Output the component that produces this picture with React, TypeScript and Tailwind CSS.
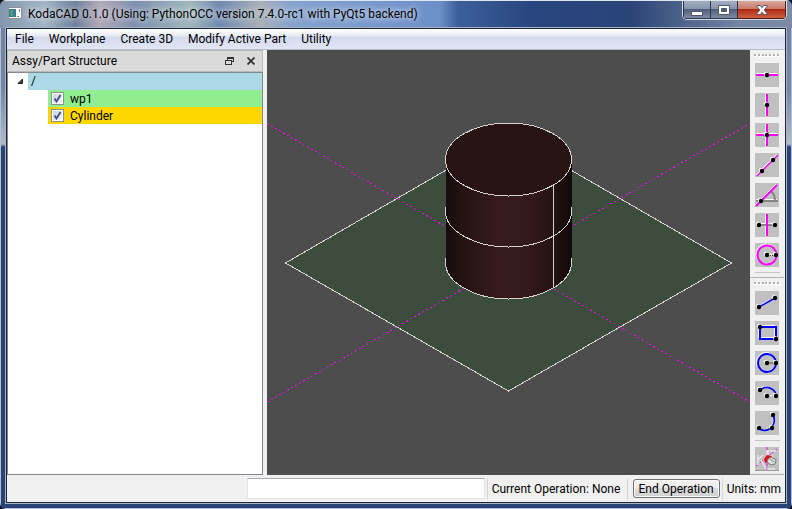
import type { ReactNode } from "react";

const MAGENTA = "#ff00ff";
const BLUE = "#0000ff";

function Dot({ x, y }: { x: number; y: number }) {
  return (
    <g>
      <circle cx={x - 1} cy={y - 1} r="2" fill="#fff" />
      <circle cx={x} cy={y} r="2.2" fill="#000" />
    </g>
  );
}

function Tool({ label, children }: { label: string; children: ReactNode }) {
  return (
    <button type="button" aria-label={label} title={label} className="block size-6 bg-[#c0c0c0]">
      <svg viewBox="0 0 24 24" className="block size-6" fill="none">
        {children}
      </svg>
    </button>
  );
}

function Handle() {
  return (
    <div className="flex h-1 w-full justify-between px-1" aria-hidden="true">
      {[0, 1, 2, 3, 4, 5, 6].map((i) => (
        <span key={i} className="size-[3px] border-r border-b border-white bg-[#b0b0b0]" />
      ))}
    </div>
  );
}

function TitleBar() {
  return (
    <header className="flex h-7 shrink-0 items-start border-t border-[#dfe6ee] bg-[linear-gradient(90deg,#8396ac_0px,#a3b5c6_45px,#6d809b_75px,#b3a9b9_100px,#7d8fae_135px,#a0b7bc_190px,#7089b0_220px,#a9b0b6_260px,#86a3cf_290px,#7294cb_400px,#6c8fc7_440px,#3c5f9b_458px,#294680_530px,#294376_630px,#4d628a_680px,#7385a3_740px,#7c8aa3_100%)] pl-2">
      <svg viewBox="0 0 14 12" className="mt-[6px] h-3 w-[14px]" shapeRendering="crispEdges" aria-hidden="true">
        <rect width="14" height="12" fill="#8a929c" />
        <rect x="1" y="1" width="12" height="10" fill="#fff" />
        <rect x="1" y="2" width="7" height="8" fill="#377f93" />
        <rect x="2" y="3" width="3" height="6" fill="#4c9b78" />
        <path d="M11 2h1v3h-1zM9 9h2v1H9z" fill="#7c8084" />
      </svg>
      <h1 className="ml-[6px] h-6 pt-[5px] text-xs leading-4 whitespace-nowrap text-black [text-shadow:0_0_6px_#ffffffcc,0_0_9px_#ffffff99]">
        KodaCAD 0.1.0 (Using: PythonOCC version 7.4.0-rc1 with PyQt5 backend)
      </h1>
      <div className="mr-[5px] ml-auto flex h-[19px] overflow-hidden rounded-b-[5px] border-x border-b border-[#d3d9e2]">
        <button type="button" aria-label="Minimize" className="flex w-7 items-center justify-center border border-t-0 border-[#29354d] bg-[linear-gradient(#a3afc0_0%,#8693aa_48%,#505e7b_50%,#7e8ca5_100%)]">
          <svg viewBox="0 0 12 12" className="size-3"><rect x=".5" y="7.500" width="11" height="4" fill="#fff" stroke="#535666" /></svg>
        </button>
        <button type="button" aria-label="Maximize" className="flex w-[27px] items-center justify-center border-r border-b border-[#29354d] bg-[linear-gradient(#a3afc0_0%,#8693aa_48%,#505e7b_50%,#7e8ca5_100%)]">
          <svg viewBox="0 0 12 12" className="size-3"><path d="M.5 1.500h11v9H.5zM3.500 4.500v3h5v-3z" fill="#fff" fillRule="evenodd" stroke="#535666" /></svg>
        </button>
        <button type="button" aria-label="Close" className="flex w-12 items-center justify-center border-r border-b border-[#4a1c1c] bg-[linear-gradient(#dba99d_0%,#ca7667_48%,#b02a12_50%,#cf6040_100%)]">
          <svg viewBox="0 0 12 12" className="size-3"><path d="M1 1.500h3.200L6 3.700l1.800-2.200H11v1L8.200 6l2.800 3.500v1H7.800L6 8.300l-1.800 2.200H1v-1L3.800 6 1 2.500z" fill="#fff" stroke="#535666" /></svg>
        </button>
      </div>
    </header>
  );
}

function MenuBar() {
  return (
    <nav className="flex h-[21px] shrink-0 items-center gap-[15px] border-b border-[#b6bccc] bg-[linear-gradient(#fff_0%,#e7ebf5_34%,#d4daed_40%,#e1e6f6_100%)] px-2">
      {["File", "Workplane", "Create 3D", "Modify Active Part", "Utility"].map((item) => (
        <button key={item} type="button" className="leading-4 whitespace-nowrap">{item}</button>
      ))}
    </nav>
  );
}

function TreeItem({ label, color }: { label: string; color: string }) {
  return (
    <label className={`ml-10 flex h-[17px] items-center gap-[6px] pl-[3px] ${color}`}>
      <input type="checkbox" defaultChecked className="peer sr-only" />
      <span className="flex size-[13px] items-center justify-center border border-[#8e8f8f] bg-[linear-gradient(135deg,#cbcfd5,#f6f6f6)] outline-1 -outline-offset-2 outline-white">
        <svg viewBox="0 0 9 9" className="size-[9px]"><path d="M1.500 4.500 3.500 7.500 7.500 1" fill="none" stroke="#3d4f91" strokeWidth="1.800" /></svg>
      </span>
      <span>{label}</span>
    </label>
  );
}

function StructurePanel() {
  return (
    <aside className="flex w-64 shrink-0 flex-col">
      <div className="flex h-[22px] items-center border border-[#b9b9b9] bg-[#dadada] pr-[7px] pl-1">
        <h2 className="leading-4">Assy/Part Structure</h2>
        <button type="button" aria-label="Float panel" className="ml-auto">
          <svg viewBox="0 0 10 10" className="size-[10px]" fill="none" stroke="#333" shapeRendering="crispEdges"><path d="M2 1.500h7M2.500 1v3M8.500 1v5M6 5.500h3M0 4.500h7M.5 4v5M6.500 4v5M0 8.500h7M2 2.500h7" /></svg>
        </button>
        <button type="button" aria-label="Close panel" className="ml-3">
          <svg viewBox="0 0 8 8" className="size-2" fill="none" stroke="#333" strokeWidth="1.800"><path d="m.5.5 7 7m0-7-7 7" /></svg>
        </button>
      </div>
      <div className="flex-1 border border-[#828790] bg-white">
        <div className="flex h-[17px] items-center">
          <button type="button" aria-label="Collapse assembly" className="flex h-full w-5 items-center justify-center pl-1">
            <svg viewBox="0 0 7 7" className="size-[7px]"><path d="M5.500 1v4.500H1z" fill="#404040" stroke="#222" /></svg>
          </button>
          <div className="h-full flex-1 bg-[#add8e6] pl-[3px] leading-[17px]">/</div>
        </div>
        <TreeItem label="wp1" color="bg-[#90ee90]" />
        <TreeItem label="Cylinder" color="bg-[#ffd700]" />
      </div>
    </aside>
  );
}

function Viewport() {
  return (
    <main className="relative min-w-0 flex-1 bg-[#4d4d4d]">
      <svg viewBox="0 0 483 426" preserveAspectRatio="xMidYMid slice" className="absolute size-full" fill="none" shapeRendering="crispEdges" role="img" aria-label="Cylinder on workplane">
        <defs>
          <linearGradient id="side">
            <stop offset="0" stopColor="#170b0b" />
            <stop offset=".15" stopColor="#261414" />
            <stop offset=".42" stopColor="#371b1c" />
            <stop offset=".65" stopColor="#351a1b" />
            <stop offset=".85" stopColor="#241313" />
            <stop offset="1" stopColor="#130909" />
          </linearGradient>
        </defs>
        <path d="M18.500 213.500 241.500 84.500 464.500 213.500 241.500 341.500z" fill="#3d4d3d" stroke="#d6d6d2" />
        <path d="M0 74 483 352.500M0 352.500 483 74" stroke={MAGENTA} strokeDasharray="2 2.600" />
        <path d="M178.500 110V213C178.500 233 207 249.500 241.500 249.500S304.500 233 304.500 213V110z" fill="url(#side)" />
        <ellipse cx="241.500" cy="110" rx="63" ry="36.500" fill="#281413" stroke="#d6d2d2" />
        <path d="M178.500 157v5C178.500 181 207 197.500 241.500 197.500S304.500 181 304.500 162v-5M178.500 208v5C178.500 233 207 249.500 241.500 249.500S304.500 233 304.500 213v-5M286.500 135v103" stroke="#d6d2d2" />
      </svg>
    </main>
  );
}

function Toolbars() {
  return (
    <aside className="flex w-[35px] shrink-0 flex-col items-center pt-1 pr-px">
      <Handle />
      <div className="mt-[5px] flex flex-col gap-[6px]">
        <Tool label="Horizontal construction line"><path d="M1 10.500h22" stroke="#fff" /><path d="M1 12h22" stroke={MAGENTA} strokeWidth="2" /><Dot x={12} y={12} /></Tool>
        <Tool label="Vertical construction line"><path d="M10.500 1v22" stroke="#fff" /><path d="M12 1v22" stroke={MAGENTA} strokeWidth="2" /><Dot x={12} y={12} /></Tool>
        <Tool label="Horizontal and vertical lines"><path d="M1 10.500h22M10.500 1v22" stroke="#fff" /><path d="M1 12h22M12 1v22" stroke={MAGENTA} strokeWidth="2" /><Dot x={12} y={12} /></Tool>
        <Tool label="Line through two points"><path d="M1 22 22 1" stroke="#fff" /><path d="M2 23 23 2" stroke={MAGENTA} strokeWidth="1.500" /><Dot x={7} y={18} /><Dot x={18} y={7} /></Tool>
        <Tool label="Angled line"><path d="M1 16.500h21" stroke="#fff" /><path d="M1 18h22M16 8q4 4 4 10" stroke="#858585" strokeWidth="2" /><path d="M0 22 21 1" stroke="#fff" /><path d="M1 23 22 2" stroke={MAGENTA} strokeWidth="2" /><Dot x={6} y={18} /></Tool>
        <Tool label="Center line"><path d="M4 10.500h16M10.500 1v22" stroke="#fff" /><path d="M4 12h16" stroke="#858585" strokeWidth="2" /><path d="M12 1v22" stroke={MAGENTA} strokeWidth="2" /><Dot x={4} y={12} /><Dot x={20} y={12} /></Tool>
        <Tool label="Construction circle"><circle cx="11" cy="11" r="10" stroke="#fff" /><circle cx="12" cy="12" r="9.500" stroke={MAGENTA} strokeWidth="2" /><path d="m14 12 2-1 1 2 2-2" stroke="#fff" /><path d="M15 12.500h5" stroke="#333" strokeDasharray="1 1" /><Dot x={12} y={12} /><Dot x={21} y={12} /></Tool>
      </div>
      <div className="mt-[5px] h-px w-[25px] bg-[#c5c5c5]" />
      <div className="mt-1 h-px w-full bg-[#b0b0b0]" />
      <div className="mt-1 w-full"><Handle /></div>
      <div className="mt-[5px] flex flex-col gap-[6px]">
        <Tool label="Line"><path d="m4 15 16-9" stroke="#fff" /><path d="m4 16 16-9" stroke={BLUE} strokeWidth="1.500" /><Dot x={4} y={16} /><Dot x={20} y={7} /></Tool>
        <Tool label="Rectangle"><path d="M3.500 4.500h16v12h-16z" stroke="#fff" /><path d="M5 6h16v12H5z" stroke={BLUE} strokeWidth="2" /><Dot x={5} y={6} /><Dot x={21} y={18} /></Tool>
        <Tool label="Circle"><circle cx="11" cy="11" r="9.500" stroke="#fff" /><circle cx="12" cy="12" r="9" stroke={BLUE} strokeWidth="2" /><path d="M12 12h9" stroke="#858585" strokeWidth="2" /><Dot x={12} y={12} /><Dot x={21} y={12} /></Tool>
        <Tool label="Arc by center"><path d="M4 8C12 2 21 7 20 15" stroke="#fff" /><path d="M5 9C13 3 21 9 21 15" stroke={BLUE} strokeWidth="1.800" /><path d="M12 14.500h9" stroke="#fff" strokeDasharray="2 1" /><Dot x={5} y={9} /><Dot x={12} y={15} /><Dot x={21} y={15} /></Tool>
        <Tool label="Arc by three points"><path d="M3 16c7 7 19-1 14-12" stroke="#fff" /><path d="M4 17C11 24 23 15 18 4" stroke={BLUE} strokeWidth="1.800" /><Dot x={4} y={17} /><Dot x={17} y={17} /><Dot x={18} y={4} /></Tool>
      </div>
      <div className="mt-[5px] mb-[6px] h-px w-[25px] bg-[#c5c5c5]" />
      <Tool label="Erase construction"><path d="M12 0v24M1 19 22 2" stroke={MAGENTA} strokeDasharray="4 1" /><path d="M3 8v10M3 13l5-5M6 13l5 9M12 3v8M15 4h6M12 22h8M13 3v6h5" stroke="#e6e6e6" strokeWidth="1.500" /><path d="m9 12 3-4 5 1-3 5-4 2z" fill="#e01010" /><path d="m13 12 3-2 5 3-1 4-4 1-4-3z" fill="#ddd" stroke="#777" /><path d="m15 12 4 3" stroke="#888" /><path d="M0 23.500h24" stroke="#999" /></Tool>
      <div className="mt-auto h-px w-full bg-[#b0b0b0]" />
    </aside>
  );
}

function StatusBar() {
  return (
    <footer className="flex h-[27px] shrink-0 items-center pr-1">
      <input aria-label="Command input" className="ml-auto h-[21px] w-[238px] border border-[#e2e3ea] border-t-[#abadb3] bg-white px-1 outline-none" />
      <span className="mx-[2px] h-[22px] w-px bg-[#d5d5d5]" />
      <span className="w-[137px] pl-[2px] whitespace-nowrap">Current Operation: None</span>
      <span className="mr-[5px] h-[22px] w-px bg-[#d5d5d5]" />
      <button type="button" className="h-[19px] w-[87px] rounded-[3px] border border-[#707070] bg-[linear-gradient(#f2f2f2_0%,#ebebeb_49%,#ddd_50%,#cfcfcf_100%)] leading-4 whitespace-nowrap shadow-[inset_0_0_0_1px_#fcfcfc]">End Operation</button>
      <span className="mr-1 ml-[2px] h-[22px] w-px bg-[#d5d5d5]" />
      <span className="whitespace-nowrap">Units: mm</span>
    </footer>
  );
}

export default function App() {
  return (
    <div className="flex min-h-screen bg-[#0b1226]">
      <div className="flex min-w-0 flex-1 flex-col overflow-hidden rounded-md bg-[#294376] font-['Roboto',sans-serif] text-xs text-black">
        <TitleBar />
        <div className="flex flex-1 border-x border-b border-[#b4c0d2] bg-[linear-gradient(#7385a3_0px,#7385a3_60px,#b0bccb_116px,#294376_119px,#294376_100%)] px-[5px] pb-[5px]">
          <div className="flex min-w-0 flex-1 flex-col border border-[#1b2438] bg-[#f0f0f0] outline-1 outline-[#a8b5c9]">
            <MenuBar />
            <div className="flex flex-1">
              <StructurePanel />
              <div className="w-1 shrink-0" />
              <Viewport />
              <Toolbars />
            </div>
            <StatusBar />
          </div>
        </div>
      </div>
    </div>
  );
}
